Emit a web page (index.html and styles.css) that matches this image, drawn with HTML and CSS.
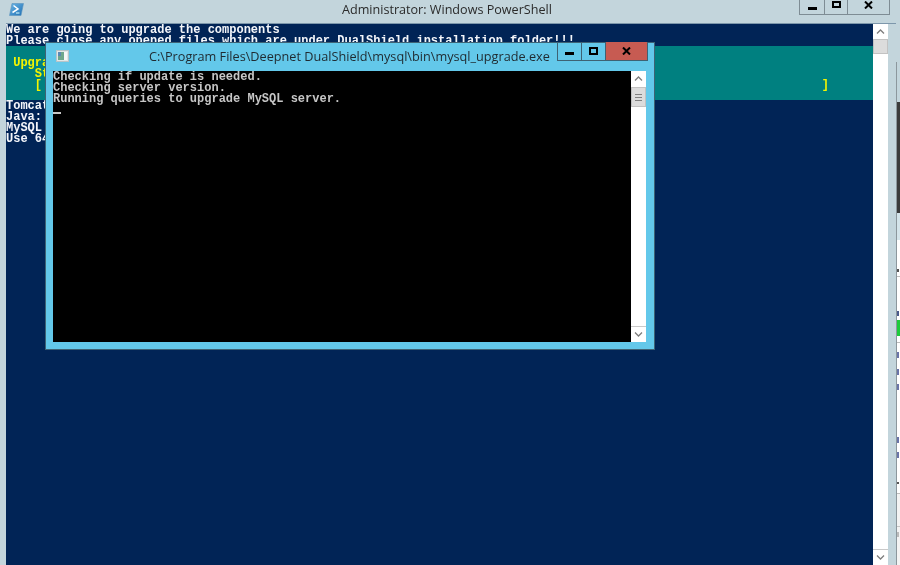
FILE: index.html
```
<!DOCTYPE html>
<html lang="en">
<head>
<meta charset="utf-8">
<title>Windows PowerShell upgrade</title>
<link rel="stylesheet" href="styles.css">
</head>
<body>
<main class="desktop">
  <section class="backwin">
    <div class="bw-top"></div>
    <div class="bw-dark"></div>
    <div class="bw-head"></div>
    <div class="bw-pane">
      <div class="bw-row bw-a"><i class="speck dark"></i></div>
      <div class="bw-row bw-b"><i class="speck navy"></i></div>
      <div class="bw-green"></div>
      <div class="bw-row bw-c"></div>
      <div class="bw-row bw-d"><i class="speck blue"></i></div>
      <div class="bw-row bw-e"><i class="speck blue"></i></div>
      <div class="bw-row bw-f"><i class="speck blue"></i></div>
      <div class="bw-row bw-g"><i class="speck blue"></i></div>
      <div class="bw-row bw-h"><i class="speck blue"></i></div>
      <div class="bw-row bw-i"><i class="speck dark"></i></div>
      <div class="bw-row bw-j"></div>
      <div class="bw-row bw-k"><i class="speck grey"></i></div>
    </div>
  </section>

  <section class="ps">
    <header class="ps-title">
      <svg class="ps-icon" viewBox="0 0 15 13" aria-hidden="true">
        <defs><linearGradient id="psg" x1="0" y1="0" x2="1" y2="1"><stop offset="0" stop-color="#6bb6e6"/><stop offset="1" stop-color="#1f6fb4"/></linearGradient></defs>
        <path d="M3 0.5H14.5L12 12.5H0.5Z" fill="url(#psg)" stroke="#5b93bd" stroke-width=".6"/>
        <path d="M4.5 2.5L9 6 3.5 9.5" fill="none" stroke="#fff" stroke-width="1.5"/>
        <path d="M7 10h3.5" stroke="#dff" stroke-width="1"/>
      </svg>
      <h1 class="ps-name">Administrator: Windows PowerShell</h1>
      <div class="btns ps-btns">
        <div class="btn ps-min"><i class="g-min"></i></div>
        <div class="btn ps-max"><i class="g-max"></i></div>
        <div class="btn ps-close"><svg class="g-x" viewBox="0 0 9 8" aria-hidden="true"><path d="M1 .5L8 7.5M8 .5L1 7.5" stroke="#000" stroke-width="2"/></svg></div>
      </div>
    </header>
    <div class="ps-body">
      <div class="console">
        <pre class="term intro">We are going to upgrade the components
Please close any opened files which are under DualShield installation folder!!!</pre>
        <pre class="term band">

 Upgra
    St
    [                                                                                                            <span class="rb">]</span>
</pre>
        <pre class="term info">Tomcat
Java:
MySQL
Use 64</pre>
      </div>
      <div class="vbar">
        <div class="arrowbtn"><svg viewBox="0 0 9 5" aria-hidden="true"><path d="M1 4.5L4.5 1 8 4.5" fill="none" stroke="#7d7d7d" stroke-width="1.3"/></svg></div>
        <div class="thumb"></div>
        <div class="track"></div>
        <div class="arrowbtn down"><svg viewBox="0 0 9 5" aria-hidden="true"><path d="M1 .5L4.5 4 8 .5" fill="none" stroke="#7d7d7d" stroke-width="1.3"/></svg></div>
      </div>
    </div>
  </section>

  <section class="sub">
    <header class="sub-title">
      <svg class="sub-icon" viewBox="0 0 13 12" aria-hidden="true">
        <rect x=".5" y=".5" width="12" height="11" fill="#e2e8e8" stroke="#b7c4c8"/>
        <rect x="2" y="2" width="6" height="8" fill="#6fa78c"/>
        <rect x="2" y="2" width="3" height="4" fill="#5a88b4"/>
        <rect x="8" y="2" width="3" height="8" fill="#f6f8f8"/>
      </svg>
      <h2 class="sub-name">C:\Program Files\Deepnet DualShield\mysql\bin\mysql_upgrade.exe</h2>
      <div class="btns sub-btns">
        <div class="btn sub-min"><i class="g-min"></i></div>
        <div class="btn sub-max"><i class="g-max"></i></div>
        <div class="btn sub-close"><svg class="g-x" viewBox="0 0 9 8" aria-hidden="true"><path d="M1 .5L8 7.5M8 .5L1 7.5" stroke="#000" stroke-width="2"/></svg></div>
      </div>
    </header>
    <div class="sub-body">
      <div class="client">
        <pre class="term grey">Checking if update is needed.
Checking server version.
Running queries to upgrade MySQL server.</pre>
        <div class="cursor"></div>
      </div>
      <div class="vbar">
        <div class="arrowbtn"><svg viewBox="0 0 9 5" aria-hidden="true"><path d="M1 4.5L4.5 1 8 4.5" fill="none" stroke="#7d7d7d" stroke-width="1.3"/></svg></div>
        <div class="thumb grip"><b></b><b></b><b></b></div>
        <div class="track"></div>
        <div class="arrowbtn down"><svg viewBox="0 0 9 5" aria-hidden="true"><path d="M1 .5L4.5 4 8 .5" fill="none" stroke="#7d7d7d" stroke-width="1.3"/></svg></div>
      </div>
    </div>
  </section>
</main>
</body>
</html>
```
FILE: styles.css
```
html, body { margin: 0; padding: 0; background: #c3d5dc; }
.desktop { position: relative; width: 900px; height: 565px; overflow: hidden; background: #c3d5dc; filter: blur(.3px); }

/* window behind, only a sliver shows */
.backwin { position: absolute; left: 896px; top: 62px; width: 4px; height: 503px; display: flex; flex-direction: column; border-left: 1px solid #8c979d; box-sizing: border-box; background: #c3d5dc; }
.bw-top { height: 40px; }
.bw-dark { height: 111px; background: #3b3b3b; }
.bw-head { height: 27px; background: #d4e4ea; }
.bw-pane { flex: 1; display: flex; flex-direction: column; background: #fff; }
.bw-row { box-sizing: border-box; position: relative; }
.speck { display: block; position: absolute; left: 0; width: 2px; }
.speck.dark { background: #555; height: 3px; }
.speck.navy { background: #4a5a8a; height: 5px; top: 10px; }
.speck.blue { background: #6a74a8; height: 6px; top: 9px; }
.speck.grey { background: #bbb; height: 5px; top: 5px; }
.bw-a { height: 37px; border-bottom: 1px solid #bdbdbd; }
.bw-a .speck { top: 29px; }
.bw-b { height: 43px; }
.bw-b .speck { top: 34px; }
.bw-green { height: 16px; background: #1ecb3c; }
.bw-c { height: 7px; border-bottom: 1px solid #bdbdbd; }
.bw-d { height: 17px; }
.bw-e { height: 15px; }
.bw-f { height: 60px; }
.bw-g { height: 17px; }
.bw-g .speck { top: 2px; }
.bw-h { height: 30px; }
.bw-h .speck { top: 0; }
.bw-i { height: 12px; border-bottom: 1px solid #bdbdbd; }
.bw-i .speck { top: 0; height: 2px; }
.bw-j { height: 33px; border-bottom: 1px solid #c6c6c6; background: #f3f3f3; }
.bw-k { flex: 1; background: #f3f3f3; }

/* PowerShell window */
.ps { position: absolute; left: 0; top: 0; width: 896px; height: 565px; display: flex; flex-direction: column; padding: 0 8px 0 6px; box-sizing: border-box; background: #c3d5dc; }
.ps-title { position: relative; height: 24px; flex: none; border-bottom: 1px solid #7d97ab; box-sizing: border-box; margin-right: -8px; }
.ps-icon { position: absolute; left: 3px; top: 3px; width: 15px; height: 13px; }
.ps-name { position: absolute; left: 336px; top: 0; margin: 0; font: 400 12.6px/19px "Open Sans", sans-serif; color: #2a2a2a; white-space: nowrap; }
.ps-body { flex: 1; display: flex; min-height: 0; }
.console { flex: 1; background: #012456; overflow: hidden; }
.term { margin: 0; font: 700 12px/10.85px "Liberation Mono", monospace; color: #f4f6fa; white-space: pre; box-sizing: border-box; padding-top: 1px; }
.intro { height: 22px; }
.band { background: #008080; color: #f4f400; height: 54px; }
.rb { margin-left: 2px; }
.term.grey { color: #c6c6c6; line-height: 11px; height: 34px; }

.btns { position: absolute; top: 0; display: flex; }
.btn { box-sizing: border-box; position: relative; display: flex; align-items: center; justify-content: center; border: 1px solid #7e8c94; border-top: 0; border-left-width: 0; }
.ps-btns { left: 793px; height: 15px; }
.ps-min { width: 26px; border-left-width: 1px; }
.ps-max { width: 23px; }
.ps-close { width: 42px; }
.g-min { display: block; width: 9px; height: 3px; background: #000; }
.g-max { display: block; width: 9px; height: 7px; box-sizing: border-box; border: 2px solid #000; }
.g-x { display: block; width: 9px; height: 8px; }
.ps-btns .g-min { margin-top: 3px; }
.ps-btns .g-max, .ps-btns .g-x { margin-top: -5px; }

.vbar { width: 15px; flex: none; display: flex; flex-direction: column; background: #fff; }
.arrowbtn { height: 15px; flex: none; display: flex; align-items: center; justify-content: center; background: #fff; box-sizing: border-box; }
.arrowbtn svg { display: block; width: 9px; height: 5px; }
.arrowbtn.down { height: 16px; border-top: 1px solid #c9c9c9; }
.thumb { height: 15px; flex: none; background: #dcdcdc; border: 1px solid #c2c2c2; box-sizing: border-box; }
.track { flex: 1; }

/* Upgrade child window */
.sub { position: absolute; left: 45px; top: 42px; width: 610px; height: 308px; box-sizing: border-box; border: 1px solid #3e6274; background: #63c8ea; display: flex; flex-direction: column; padding: 0 8px 7px 7px; }
.sub-title { height: 28px; flex: none; position: relative; }
.sub-icon { position: absolute; left: 3px; top: 7px; width: 13px; height: 12px; }
.sub-name { position: absolute; left: 96px; top: 4px; margin: 0; font: 400 12.7px/19px "Open Sans", sans-serif; color: #1f2a30; white-space: nowrap; }
.sub-btns { left: 504px; height: 19px; top: -1px; }
.sub-btns .btn { border-color: #3e6274; }
.sub-btns .g-min { margin-top: 4px; }
.sub-btns .g-max { height: 8px; }
.sub-min { width: 25px; border-left-width: 1px !important; }
.sub-max { width: 24px; }
.sub-close { width: 42px; background: #c75b52; }
.sub-body { flex: 1; display: flex; min-height: 0; }
.client { flex: 1; background: #000; }
.cursor { width: 8px; height: 2px; margin-top: 7px; background: #c6c6c6; }
.grip { height: 20px; margin-top: 1px; display: flex; flex-direction: column; align-items: center; justify-content: center; gap: 2px; }
.grip b { display: block; width: 7px; height: 1px; background: #808080; }
```
